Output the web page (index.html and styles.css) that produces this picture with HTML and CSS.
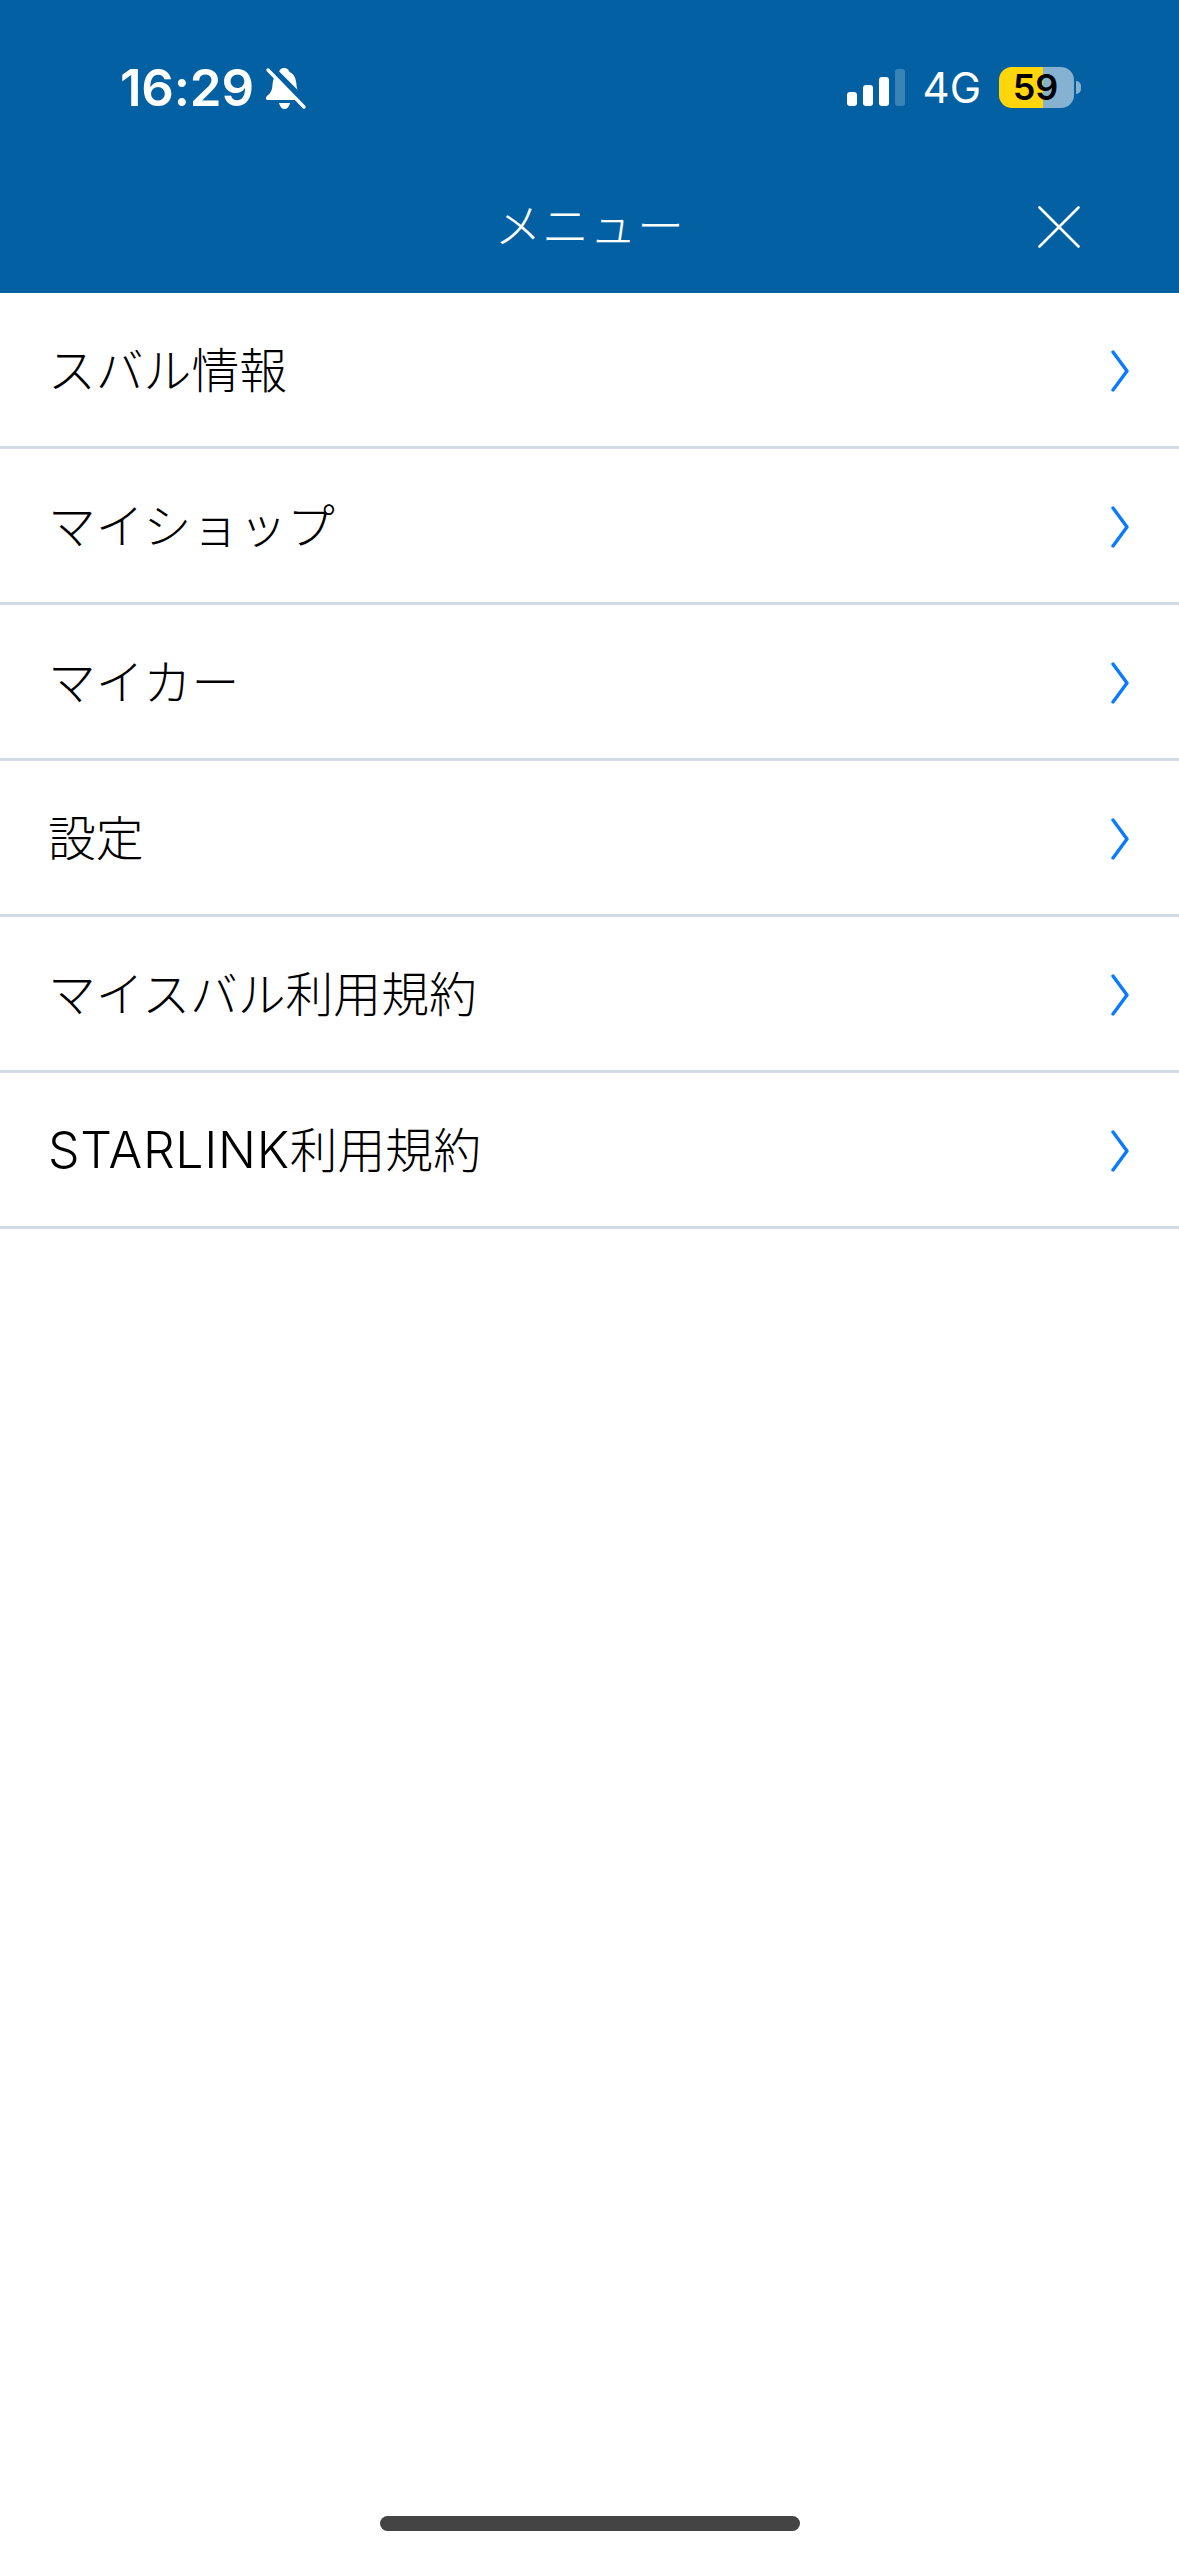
FILE: index.html
```html
<!DOCTYPE html>
<html lang="ja">
<head>
<meta charset="utf-8">
<title>メニュー</title>
<link rel="stylesheet" href="styles.css">
</head>
<body>
<div class="app">
  <header class="header">
    <div class="status">
      <div class="status-left">
        <span class="time">16:29</span>
        <svg class="bell" viewBox="0 0 44 44" width="44" height="44">
          <path fill="#fff" d="M21 2C24 2 26 4 26.5 6C32 8 33 14 33.5 19C34 25 36 28 40 31C41 33 40 34 38 34L5 34C3 34 2 32 4 30C8 27 9 24 9.5 19C10 13 12 8 16 6C16.5 4 18 2 21 2Z"/>
          <path fill="#fff" d="M16 37H27C26 41 24 43 21.5 43C19 43 17 41 16 37Z"/>
          <path stroke="#0360a2" stroke-width="8" d="M6 1L44 39"/>
          <path stroke="#fff" stroke-width="3.4" stroke-linecap="round" d="M5 4L41 41"/>
        </svg>
      </div>
      <div class="status-right">
        <div class="signal">
          <span class="bar bar-1"></span>
          <span class="bar bar-2"></span>
          <span class="bar bar-3"></span>
          <span class="bar bar-4"></span>
        </div>
        <span class="network">4G</span>
        <div class="battery-wrap">
          <div class="battery">59</div>
          <span class="nub"></span>
        </div>
      </div>
    </div>
    <div class="nav">
      <span></span>
      <h1 class="title">メニュー</h1>
      <svg class="close" viewBox="0 0 42 42" width="42" height="42">
        <path d="M1.5 1.5L40.5 40.5M40.5 1.5L1.5 40.5" stroke="#fff" stroke-width="2.6" stroke-linecap="round" fill="none"/>
      </svg>
    </div>
  </header>
  <ul class="menu">
    <li class="row"><span class="label">スバル情報</span><svg class="chev" viewBox="0 0 20 44" width="20" height="44"><path d="M4 3L18 22L4 41"/></svg></li>
    <li class="row"><span class="label">マイショップ</span><svg class="chev" viewBox="0 0 20 44" width="20" height="44"><path d="M4 3L18 22L4 41"/></svg></li>
    <li class="row"><span class="label">マイカー</span><svg class="chev" viewBox="0 0 20 44" width="20" height="44"><path d="M4 3L18 22L4 41"/></svg></li>
    <li class="row"><span class="label">設定</span><svg class="chev" viewBox="0 0 20 44" width="20" height="44"><path d="M4 3L18 22L4 41"/></svg></li>
    <li class="row"><span class="label">マイスバル利用規約</span><svg class="chev" viewBox="0 0 20 44" width="20" height="44"><path d="M4 3L18 22L4 41"/></svg></li>
    <li class="row"><span class="label"><span class="latin">STARLINK</span>利用規約</span><svg class="chev" viewBox="0 0 20 44" width="20" height="44"><path d="M4 3L18 22L4 41"/></svg></li>
  </ul>
  <div class="home-area"><div class="home-bar"></div></div>
</div>
</body>
</html>
```
FILE: styles.css
```css
* { box-sizing: border-box; }
html, body { margin: 0; padding: 0; background: #fff; }
body { font-family: "Liberation Sans", "Noto Sans CJK JP", sans-serif; }
.app { width: 1179px; height: 2556px; display: flex; flex-direction: column; overflow: hidden; }

.header { height: 293px; background: #0360a2; color: #fff; flex: none; }
.status { height: 175px; display: flex; justify-content: space-between; align-items: center; padding: 0 98px 0 120px; }
.status-left { display: flex; align-items: center; gap: 9px; }
.time { font-family: Inter, sans-serif; font-weight: 600; font-size: 51px; line-height: 60px; letter-spacing: -0.2px; }
.bell { display: block; }
.status-right { display: flex; align-items: center; }
.signal { display: flex; align-items: flex-end; gap: 6px; height: 37px; }
.bar { width: 10px; background: #fff; border-radius: 3px; }
.bar-1 { height: 14px; }
.bar-2 { height: 21px; }
.bar-3 { height: 29px; }
.bar-4 { height: 37px; background: rgba(255,255,255,.22); }
.network { font-family: Inter, sans-serif; font-weight: 400; font-size: 42px; line-height: 60px; margin-left: 18px; }
.battery-wrap { display: flex; align-items: center; margin-left: 18px; gap: 2px; }
.battery { width: 75px; height: 41px; padding-right: 2px; border-radius: 13px; background: linear-gradient(90deg, #ffd60a 0 44px, #86b1d1 44px); color: #000; font-family: Inter, sans-serif; font-weight: 600; font-size: 36px; line-height: 41px; text-align: center; }
.nub { width: 5px; height: 13px; background: #86b1d1; border-radius: 0 7px 7px 0; }

.nav { height: 118px; display: grid; grid-template-columns: 1fr auto 1fr; align-items: center; padding: 0 99px 14px 0; }
.title { margin: 0 0 0 99px; font-weight: 300; font-size: 47px; line-height: 60px; letter-spacing: 0.5px; }
.close { justify-self: end; display: block; }

.menu { list-style: none; margin: 0; padding: 0; }
.row { height: 156px; padding: 0 50px 3px 48px; border-bottom: 3px solid #d0dbe5; display: flex; align-items: center; justify-content: space-between; font-size: 47.8px; font-weight: 300; color: #000; }
.label { padding-bottom: 1px; }
.latin { font-family: Inter, sans-serif; font-size: 50px; font-weight: 300; letter-spacing: 0.7px; }
.chev { display: block; margin-top: 6px; fill: none; stroke: #0a7aff; stroke-width: 3.4; stroke-linecap: round; stroke-linejoin: round; }

.home-area { flex: 1; display: flex; align-items: flex-end; justify-content: center; padding-bottom: 25px; }
.home-bar { width: 420px; height: 15px; border-radius: 8px; background: #444; }
```
